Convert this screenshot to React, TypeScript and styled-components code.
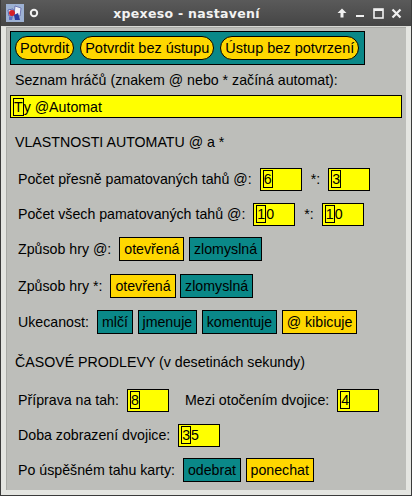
import styled, { createGlobalStyle } from "styled-components";

const GlobalStyle = createGlobalStyle`
  html, body {
    margin: 0;
    padding: 0;
    background: #3a3a3a;
  }
  body {
    font-family: "Liberation Sans", Arial, sans-serif;
    font-size: 14.2px;
    color: #000;
  }
`;

const TEAL = "#0a8888";
const GOLD = "#ffd700";
const ENTRY = "#ffff00";

const Window = styled.div`
  width: 412px;
  height: 496px;
  box-sizing: border-box;
  border: 1px solid #3b3b3b;
  border-top: none;
  display: flex;
  flex-direction: column;
  background: #3b3b3b;
`;

const TitleBar = styled.div`
  height: 26px;
  flex-shrink: 0;
  display: flex;
  align-items: center;
  background: linear-gradient(#5a5a5a, #454545);
  color: #fff;
`;

const TitleLeft = styled.div`
  display: flex;
  align-items: center;
  gap: 5px;
  padding-left: 5px;
  width: 34px;
`;

const Title = styled.div`
  flex: 1;
  text-align: center;
  font-family: "DejaVu Sans", sans-serif;
  font-weight: bold;
  font-size: 12.5px;
  letter-spacing: 0.3px;
  color: #f2f2f2;
`;

const TitleRight = styled.div`
  display: flex;
  align-items: center;
  padding-right: 6px;
`;

const WinButton = styled.div`
  width: 18px;
  height: 18px;
  display: flex;
  align-items: center;
  justify-content: center;
`;

const Frame = styled.div`
  flex: 1;
  display: flex;
  border: 5px solid #e4e5e1;
  border-top: 1px solid #d8d9d5;
  background: #bdbeba;
`;

const Client = styled.div`
  flex: 1;
  padding: 4px 4px 0 4px;
  display: flex;
  flex-direction: column;
  align-items: flex-start;
  box-shadow: inset 1px 1px 0 #a9aaa6;
`;

const Toolbar = styled.div`
  display: flex;
  gap: 6px;
  padding: 4px 5px 4px 4px;
  border: 1px solid #000;
  background: ${TEAL};
`;

const PillButton = styled.div`
  height: 24px;
  box-sizing: border-box;
  padding: 0 4px;
  display: flex;
  align-items: center;
  border: 1px solid #000;
  border-radius: 12px;
  background: ${GOLD};
  font-size: 14.5px;
`;

const Caption = styled.div<{ $top: number }>`
  margin: ${(p) => p.$top}px 0 0 5px;
  line-height: 18px;
  height: 18px;
  white-space: nowrap;
`;

const Entry = styled.div<{ $width: number }>`
  width: ${(p) => p.$width}px;
  height: 23px;
  box-sizing: border-box;
  border: 1px solid #000;
  background: ${ENTRY};
  display: flex;
  align-items: center;
  padding-left: 2px;
  white-space: nowrap;
  flex-shrink: 0;
`;

const Cursor = styled.span`
  display: inline-block;
  box-sizing: border-box;
  height: 18px;
  line-height: 16px;
  border: 1px solid #000;
  padding: 0;
`;

const Row = styled.div<{ $top: number }>`
  margin-top: ${(p) => p.$top}px;
  padding-left: 8px;
  height: 24px;
  display: flex;
  align-items: center;
  gap: 8px;
  white-space: nowrap;
`;

const Label = styled.span<{ $left?: number }>`
  margin-left: ${(p) => p.$left ?? 0}px;
`;

const Group = styled.div`
  display: flex;
  gap: 4.5px;
`;

const Toggle = styled.div<{ $on: boolean }>`
  height: 24px;
  box-sizing: border-box;
  padding: 0 4px;
  display: flex;
  align-items: center;
  border: 1px solid #000;
  background: ${(p) => (p.$on ? GOLD : TEAL)};
`;

function Value({ text, width = 42 }: { text: string; width?: number }) {
  return (
    <Entry $width={width}>
      <Cursor>{text[0]}</Cursor>
      {text.slice(1)}
    </Entry>
  );
}

function Choice({ options, active }: { options: string[]; active: number }) {
  return (
    <Group>
      {options.map((o, i) => (
        <Toggle key={o} $on={i === active}>
          {o}
        </Toggle>
      ))}
    </Group>
  );
}

function AppIcon() {
  return (
    <svg width="18" height="18" viewBox="0 0 18 18">
      <rect width="18" height="18" fill="#9db1d3" />
      <path d="M9 2 L15 4 L14 12 L8 11 Z" fill="#eef0f8" stroke="#5a63a8" strokeWidth="0.8" />
      <path d="M2 6 L7 5 L8 11 L3 12 Z" fill="#fff" stroke="#3b4aa0" strokeWidth="0.8" />
      <circle cx="6" cy="9" r="3" fill="#d62028" />
      <path d="M8 11 L12 9 L14 16 L9 16 Z" fill="#2b3c9e" />
      <path d="M3 13 L7 12 L6 16 L3 16 Z" fill="#5f6fc0" />
    </svg>
  );
}

function Ring() {
  return (
    <svg width="10" height="10" viewBox="0 0 10 10">
      <circle cx="5" cy="5" r="3.2" fill="none" stroke="#f0f0f0" strokeWidth="2" />
    </svg>
  );
}

function UpIcon() {
  return (
    <svg width="10" height="10" viewBox="0 0 10 10">
      <path d="M5 0.5 L9.5 5 L6.5 5 L6.5 9.5 L3.5 9.5 L3.5 5 L0.5 5 Z" fill="#f0f0f0" />
    </svg>
  );
}

function MinIcon() {
  return (
    <svg width="10" height="10" viewBox="0 0 10 10">
      <rect x="1" y="7" width="8" height="2" fill="#f0f0f0" />
    </svg>
  );
}

function MaxIcon() {
  return (
    <svg width="11" height="11" viewBox="0 0 11 11">
      <rect x="1" y="1" width="9" height="9" fill="none" stroke="#f0f0f0" strokeWidth="1.6" />
      <rect x="1" y="1" width="9" height="2" fill="#f0f0f0" />
    </svg>
  );
}

function CloseIcon() {
  return (
    <svg width="11" height="11" viewBox="0 0 11 11">
      <path d="M1.5 1.5 L9.5 9.5 M9.5 1.5 L1.5 9.5" stroke="#f0f0f0" strokeWidth="2.2" />
    </svg>
  );
}

export default function App() {
  return (
    <>
      <GlobalStyle />
      <Window>
        <TitleBar>
          <TitleLeft>
            <AppIcon />
            <Ring />
          </TitleLeft>
          <Title>xpexeso - nastavení</Title>
          <TitleRight>
            <WinButton>
              <UpIcon />
            </WinButton>
            <WinButton>
              <MinIcon />
            </WinButton>
            <WinButton>
              <MaxIcon />
            </WinButton>
            <WinButton>
              <CloseIcon />
            </WinButton>
          </TitleRight>
        </TitleBar>
        <Frame>
          <Client>
            <Toolbar>
              <PillButton>Potvrdit</PillButton>
              <PillButton>Potvrdit bez ústupu</PillButton>
              <PillButton>Ústup bez potvrzení</PillButton>
            </Toolbar>

            <Caption $top={6}>Seznam hráčů (znakem @ nebo * začíná automat):</Caption>
            <div style={{ marginTop: 6 }}>
              <Value text="Ty @Automat" width={392} />
            </div>

            <Caption $top={15}>VLASTNOSTI AUTOMATU @ a *</Caption>

            <Row $top={16}>
              <Label>Počet přesně pamatovaných tahů @:</Label>
              <Value text="6" />
              <Label $left={1}>*:</Label>
              <Value text="3" />
            </Row>
            <Row $top={11}>
              <Label>Počet všech pamatovaných tahů @:</Label>
              <Value text="10" />
              <Label $left={1}>*:</Label>
              <Value text="10" />
            </Row>
            <Row $top={11}>
              <Label>Způsob hry @:</Label>
              <Choice options={["otevřená", "zlomyslná"]} active={0} />
            </Row>
            <Row $top={13}>
              <Label>Způsob hry *:</Label>
              <Choice options={["otevřená", "zlomyslná"]} active={0} />
            </Row>
            <Row $top={12}>
              <Label>Ukecanost:</Label>
              <Choice options={["mlčí", "jmenuje", "komentuje", "@ kibicuje"]} active={3} />
            </Row>

            <Caption $top={19}>ČASOVÉ PRODLEVY (v desetinách sekundy)</Caption>

            <Row $top={17}>
              <Label>Příprava na tah:</Label>
              <Value text="8" />
              <Label $left={8}>Mezi otočením dvojice:</Label>
              <Value text="4" />
            </Row>
            <Row $top={11}>
              <Label>Doba zobrazení dvojice:</Label>
              <Value text="35" />
            </Row>
            <Row $top={11}>
              <Label>Po úspěšném tahu karty:</Label>
              <Choice options={["odebrat", "ponechat"]} active={1} />
            </Row>
          </Client>
        </Frame>
      </Window>
    </>
  );
}
